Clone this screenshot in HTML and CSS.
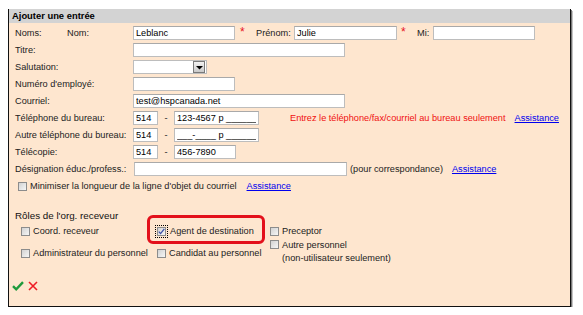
FILE: index.html
```html
<!DOCTYPE html>
<html lang="fr">
<head>
<meta charset="utf-8">
<title>Ajouter une entrée</title>
<link rel="stylesheet" href="styles.css">
</head>
<body>
<div class="panel">
  <div class="hdr">Ajouter une entrée</div>
  <div class="body">
    <div class="rows">
      <div class="row">
        <span class="lbl l52">Noms:</span><span class="lbl l66">Nom:</span>
        <input class="tb w102" type="text" value="Leblanc"><span class="req">*</span>
        <span class="lbl l38">Prénom:</span><input class="tb w103" type="text" value="Julie"><span class="req r2">*</span>
        <span class="lbl l16">Mi:</span><input class="tb w102" type="text" value="">
      </div>
      <div class="row">
        <span class="lbl l118">Titre:</span><input class="tb w212" type="text" value="">
      </div>
      <div class="row">
        <span class="lbl l118">Salutation:</span>
        <span class="sel"><span class="arrow"><svg width="7" height="5" viewBox="0 0 7 5"><path d="M0 1h7L3.5 4.5z" fill="#000"/></svg></span></span>
      </div>
      <div class="row">
        <span class="lbl l118">Numéro d'employé:</span><input class="tb w102" type="text" value="">
      </div>
      <div class="row">
        <span class="lbl l118">Courriel:</span><input class="tb w212" type="text" value="test@hspcanada.net">
      </div>
      <div class="row">
        <span class="lbl l118">Téléphone du bureau:</span>
        <input class="tb w25" type="text" value="514"><span class="dash">-</span><input class="tb w85" type="text" value="123-4567 p ______">
        <span class="warn">Entrez le téléphone/fax/courriel au bureau seulement</span>
        <a class="help h9" href="#">Assistance</a>
      </div>
      <div class="row">
        <span class="lbl l118">Autre téléphone du bureau:</span>
        <input class="tb w25" type="text" value="514"><span class="dash">-</span><input class="tb w85" type="text" value="___-____ p ______">
      </div>
      <div class="row">
        <span class="lbl l118">Télécopie:</span>
        <input class="tb w25" type="text" value="514"><span class="dash">-</span><input class="tb w62" type="text" value="456-7890">
      </div>
      <div class="row">
        <span class="lbl l119">Désignation éduc./profess.:</span><input class="tb w213" type="text" value="">
        <span class="note">(pour correspondance)</span>
        <a class="help h9" href="#">Assistance</a>
      </div>
      <div class="row opt">
        <span class="cb"></span><span class="optxt">Minimiser la longueur de la ligne d'objet du courriel</span>
        <a class="help h10" href="#">Assistance</a>
      </div>
    </div>

    <div class="rtitle">Rôles de l'org. receveur</div>
    <div class="roles">
      <div class="role"><span class="cb"></span><span>Coord. receveur</span></div>
      <div class="role"><span class="cb on"><svg width="7" height="7" viewBox="0 0 7 7"><path d="M0.8 3.6L2.6 5.6L6.3 0.8" fill="none" stroke="#3b4fa8" stroke-width="1.3"/></svg></span><span>Agent de destination</span></div>
      <div class="role"><span class="cb"></span><span>Preceptor</span></div>
      <div class="role"><span class="cb"></span><span>Administrateur du personnel</span></div>
      <div class="role"><span class="cb"></span><span>Candidat au personnel</span></div>
      <div class="role top"><span class="cb"></span><span>Autre personnel<br>(non-utilisateur seulement)</span></div>
    </div>

    <div class="acts">
      <svg class="ok" width="12" height="10" viewBox="0 0 12 10"><path d="M1 5.2L4.2 8.3L11 1.2" fill="none" stroke="#1f9a3c" stroke-width="2.4"/></svg>
      <svg class="no" width="10" height="10" viewBox="0 0 10 10"><path d="M1 1L9 9M9 1L1 9" fill="none" stroke="#ee1c25" stroke-width="1.6"/></svg>
    </div>
  </div>
  <div class="mark"></div>
</div>
</body>
</html>
```

FILE: styles.css
```css
* { box-sizing: border-box; }
html, body { margin: 0; padding: 0; background: #fff; }
body {
  font-family: "Liberation Sans", Arial, sans-serif;
  font-size: 9.2px;
  color: #222;
}
.panel {
  position: relative;
  margin: 9px 0 0 8px;
  width: 563px;
  height: 298px;
  background: #fee6cf;
  border: 1px solid #111;
  border-top: 0;
  box-shadow: 1px 1px 0 #777, 2px 2px 0 #c4c4c4;
}
.hdr {
  height: 14px;
  line-height: 14px;
  background: #d3d3d3;
  padding-left: 3px;
  font-weight: bold;
  font-size: 9.4px;
  color: #000;
}
.body { padding: 3px 0 0 6px; }
.rows { display: flex; flex-direction: column; gap: 3px; }
.row {
  display: flex;
  align-items: center;
  height: 14px;
  white-space: nowrap;
}
.lbl { display: inline-block; flex: none; }
.l52 { width: 52px; }
.l66 { width: 66px; }
.l38 { width: 38px; }
.l16 { width: 16px; }
.l118 { width: 118px; }
.l119 { width: 119px; }
.tb {
  flex: none;
  height: 14px;
  margin: 0;
  padding: 0 2px;
  border: 1px solid #bdbdbd;
  border-top-color: #a9a9a9;
  background: #fff;
  font: 9.2px "Liberation Sans", Arial, sans-serif;
  color: #000;
  outline: none;
}
.w25 { width: 25px; }
.w62 { width: 62px; }
.w85 { width: 85px; }
.w102 { width: 102px; }
.w103 { width: 103px; }
.w212 { width: 212px; }
.w213 { width: 213px; }
.req {
  display: inline-block;
  width: 16px;
  margin-left: 5px;
  align-self: flex-start;
  color: #e8141e;
  font-size: 12px;
  line-height: 10px;
  padding-top: 1px;
}
.req.r2 { margin-left: 4px; }
.sel {
  display: flex;
  justify-content: flex-end;
  align-items: center;
  width: 74px;
  height: 14px;
  border: 1px solid #bdbdbd;
  background: #fff;
  padding-right: 1px;
}
.arrow {
  display: flex;
  align-items: flex-end;
  justify-content: center;
  width: 12px;
  height: 12px;
  border: 1px solid #7a7a7a;
  background: linear-gradient(#f2f2f2, #c9c9c9);
  padding-bottom: 2px;
}
.arrow svg { display: block; }
.dash { display: inline-block; width: 16px; text-align: center; }
.warn { margin-left: 31px; color: #f01010; }
.help { color: #0000ee; text-decoration: underline; }
.h9 { margin-left: 9px; }
.h10 { margin-left: 10px; }
.note { margin-left: 3px; }
.opt { padding-left: 3px; }
.cb {
  display: inline-flex;
  align-items: center;
  justify-content: center;
  flex: none;
  width: 9px;
  height: 9px;
  border: 1px solid #8c8c8c;
  background: linear-gradient(135deg, #d2d2d2, #f6f6f6);
}
.optxt { margin-left: 3px; }
.rtitle {
  margin-top: 16px;
  height: 13px;
  line-height: 13px;
  font-size: 9.8px;
  color: #111;
}
.roles {
  margin: 1px 0 0 4px;
  display: grid;
  grid-template-columns: 136px 113px auto;
  grid-template-rows: 16px 28px;
}
.role {
  display: flex;
  align-items: center;
  gap: 3px;
  padding-left: 2px;
  line-height: 13px;
  white-space: nowrap;
}
.role.top { align-items: flex-start; }
.role.top .cb { margin-top: 1px; }
.cb.on {
  outline: 1px dotted #000;
  outline-offset: 1px;
  margin-right: 1px;
}
.acts {
  display: flex;
  align-items: center;
  gap: 4px;
  margin: 14px 0 0 -3px;
}
.acts svg { display: block; }
.mark {
  position: absolute;
  left: 138px;
  top: 206px;
  width: 118px;
  height: 29px;
  border: 3px solid #e3101b;
  border-radius: 6px;
}
```
